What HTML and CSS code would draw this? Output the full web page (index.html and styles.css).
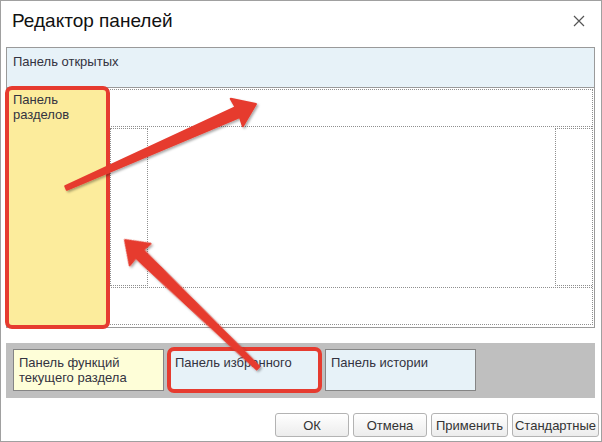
FILE: index.html
```html
<!DOCTYPE html>
<html lang="ru">
<head>
<meta charset="utf-8">
<title>Редактор панелей</title>
<link rel="stylesheet" href="styles.css">
</head>
<body>
<div class="window">
  <div class="header">
    <div class="title">Редактор панелей</div>
    <svg class="close" width="12" height="12" viewBox="0 0 12 12"><path d="M1 1L11 11M11 1L1 11" stroke="#555" stroke-width="1.2" fill="none"/></svg>
  </div>
  <div class="editor">
    <div class="panel-open">Панель открытых</div>
    <div class="editor-body">
      <div class="panel-sections">Панель<br>разделов</div>
      <div class="dock">
        <div class="dock-top"></div>
        <div class="dock-mid">
          <div class="dock-left"></div>
          <div class="dock-center"></div>
          <div class="dock-right"></div>
        </div>
        <div class="dock-bottom"></div>
      </div>
    </div>
  </div>
  <div class="band">
    <div class="tile tile-yellow">Панель функций<br>текущего раздела</div>
    <div class="tile tile-blue tile-marked">Панель избранного</div>
    <div class="tile tile-blue">Панель истории</div>
  </div>
  <div class="buttons">
    <div class="btn btn-ok">ОК</div>
    <div class="btn btn-cancel">Отмена</div>
    <div class="btn btn-apply">Применить</div>
    <div class="btn btn-std">Стандартные</div>
  </div>
  <svg class="arrows" width="602" height="442" viewBox="0 0 602 442">
    <defs>
      <filter id="sh" x="-20%" y="-20%" width="140%" height="140%">
        <feDropShadow dx="1.5" dy="1.5" stdDeviation="1" flood-color="#000" flood-opacity="0.35"/>
      </filter>
    </defs>
    <g filter="url(#sh)" fill="#e63b2f" stroke="#e63b2f" stroke-width="2" stroke-linejoin="round">
      <polygon transform="translate(66 188) rotate(-23.85)" points="0,-2 187.7,-5.5 186.7,-15 207.7,0 186.7,15 187.7,5.5 0,2"/>
      <polygon transform="translate(258 368) rotate(-136.1)" points="0,-2 164.6,-5.5 163.6,-15 184.6,0 163.6,15 164.6,5.5 0,2"/>
    </g>
  </svg>
</div>
</body>
</html>
```

FILE: styles.css
```css
html, body {
  margin: 0;
  padding: 0;
  background: #fff;
}

body {
  font-family: "Liberation Sans", Arial, sans-serif;
  font-size: 13px;
  line-height: 15px;
  color: #333340;
}

.window {
  position: relative;
  width: 602px;
  height: 442px;
  box-sizing: border-box;
  border: 1px solid #a0a0a0;
  background: #fff;
  display: flex;
  flex-direction: column;
  overflow: hidden;
}

.header {
  height: 46px;
  box-sizing: border-box;
  padding: 10px 0 0 11px;
  display: flex;
  justify-content: space-between;
  flex-shrink: 0;
}

.title {
  font-size: 19px;
  line-height: 20px;
  color: #111;
}

.close {
  margin: 4px 16px 0 0;
}

.editor {
  margin-left: 5px;
  width: 589px;
  height: 281px;
  box-sizing: border-box;
  border: 1px solid #9a9a9a;
  display: flex;
  flex-direction: column;
  flex-shrink: 0;
}

.panel-open {
  height: 40px;
  box-sizing: border-box;
  border-bottom: 1px solid #9a9a9a;
  background: #e7f2f8;
  padding: 6px 0 0 6px;
}

.editor-body {
  flex: 1;
  display: flex;
}

.panel-sections {
  width: 101px;
  box-sizing: border-box;
  background: #fcec9c;
  border-radius: 5px;
  outline: 4px solid #e63b2f;
  outline-offset: -2px;
  padding: 4px 0 0 6px;
  position: relative;
  z-index: 1;
}

.dock {
  flex: 1;
  margin: 1px 1px 2px 0;
  border: 1px dotted #8f8f8f;
  display: flex;
  flex-direction: column;
}

.dock-top {
  height: 36px;
  border-bottom: 1px dotted #8f8f8f;
}

.dock-mid {
  flex: 1;
  display: flex;
  padding: 1px 0 1px 1px;
}

.dock-left {
  width: 36px;
  border: 1px dotted #8f8f8f;
}

.dock-center {
  flex: 1;
}

.dock-right {
  width: 36px;
  border: 1px dotted #8f8f8f;
  border-right: none;
}

.dock-bottom {
  height: 36px;
  border-top: 1px dotted #8f8f8f;
}

.band {
  margin: 15px 0 0 5px;
  width: 589px;
  height: 55px;
  box-sizing: border-box;
  background: #bfbfbf;
  padding: 6px 0 0 7px;
  display: flex;
  gap: 5px;
  align-items: flex-start;
  flex-shrink: 0;
}

.tile {
  width: 151px;
  height: 42px;
  box-sizing: border-box;
  border: 1px solid #858585;
  padding: 5px 0 0 5px;
}

.tile-yellow {
  background: #fefed8;
}

.tile-blue {
  background: #e7f2f8;
}

.tile-marked {
  outline: 4px solid #e63b2f;
  outline-offset: -2px;
  border-radius: 5px;
}

.buttons {
  margin-top: 15px;
  display: flex;
  justify-content: flex-end;
  gap: 4px;
  padding-right: 2px;
  flex-shrink: 0;
}

.btn {
  height: 24px;
  box-sizing: border-box;
  border: 1px solid #b3b3b3;
  border-radius: 3px;
  background: linear-gradient(#ffffff, #ececec);
  display: flex;
  align-items: center;
  justify-content: center;
  color: #333;
  font-size: 13px;
}

.btn-ok { width: 74px; }
.btn-cancel { width: 74px; }
.btn-apply { width: 77px; }
.btn-std { width: 87px; }

.arrows {
  position: absolute;
  left: -1px;
  top: -1px;
  pointer-events: none;
  z-index: 5;
}
```
